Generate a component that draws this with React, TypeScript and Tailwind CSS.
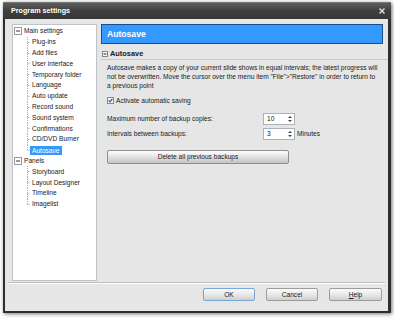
import React from 'react';

const mainItems = [
  'Plug-ins',
  'Add files',
  'User interface',
  'Temporary folder',
  'Language',
  'Auto update',
  'Record sound',
  'Sound system',
  'Confirmations',
  'CD/DVD Burner',
  'Autosave',
];
const panelItems = ['Storyboard', 'Layout Designer', 'Timeline', 'Imagelist'];

const Expander: React.FC = () => (
  <svg width="8" height="8" viewBox="0 0 8 8" className="shrink-0">
    <rect x="0.5" y="0.5" width="7" height="7" fill="#fff" stroke="#8e9aa6" />
    <line x1="2" y1="4" x2="6" y2="4" stroke="#333" />
  </svg>
);

const Connector: React.FC<{ last?: boolean }> = ({ last }) => (
  <svg width="3" height="10.8" viewBox="0 0 3 10.8" className="shrink-0">
    <line x1="0.5" y1="0" x2="0.5" y2={last ? 5.4 : 10.8} stroke="#a8a8a8" strokeDasharray="1 1" />
    <line x1="0.5" y1="5.5" x2="3" y2="5.5" stroke="#a8a8a8" strokeDasharray="1 1" />
  </svg>
);

const TreeGroup: React.FC<{ label: string; items: string[]; selected?: string }> = ({ label, items, selected }) => (
  <div>
    <div className="flex h-[10.8px] items-center pl-[1px]">
      <Expander />
      <span className="ml-[2px]">{label}</span>
    </div>
    {items.map((item, i) => (
      <div key={item} className="flex h-[10.8px] items-center pl-[14px]">
        <Connector last={i === items.length - 1} />
        <span
          className={
            item === selected
              ? 'bg-[#3399ff] text-white px-[2px] leading-[9px]'
              : 'px-[2px]'
          }
        >
          {item}
        </span>
      </div>
    ))}
  </div>
);

const SpinBox: React.FC<{ value: string }> = ({ value }) => (
  <div className="flex h-[12px] w-[32px] items-center justify-between border border-[#a9b1ba] bg-white pl-[3px] pr-[2px]">
    <span>{value}</span>
    <svg width="4" height="8" viewBox="0 0 4 8">
      <path d="M0 3 L2 1 L4 3 Z" fill="#444" />
      <path d="M0 5 L2 7 L4 5 Z" fill="#444" />
    </svg>
  </div>
);

const DlgButton: React.FC<{ children: React.ReactNode; focused?: boolean; className?: string }> = ({
  children,
  focused,
  className,
}) => (
  <div
    className={
      'flex h-[13px] items-center justify-center rounded-[2px] border bg-linear-to-b from-[#fbfbfb] via-[#e9e9e9] to-[#cfcfcf] ' +
      (focused ? 'border-[#7ba6d3] ' : 'border-[#9c9c9c] ') +
      (className ?? '')
    }
  >
    {children}
  </div>
);

const App: React.FC = () => {
  return (
    <div className="h-[318px] w-[394px] bg-white pl-[3px] pt-[2px] font-['Liberation_Sans',Arial,sans-serif] text-[6.6px] text-[#1a1a1a]">
      <div className="flex h-[311px] w-[388px] flex-col bg-[#2e2e2e] shadow-[1px_1px_4px_rgba(0,0,0,0.55)]">
        {/* title bar */}
        <div className="flex h-[17px] shrink-0 items-center justify-between border-t border-[#777] bg-linear-to-b from-[#5c5c5c] via-[#3f3f3f] to-[#363636] pl-[8px] pr-[6px]">
          <span className="text-[7.2px] font-bold text-white">Program settings</span>
          <svg width="6" height="6" viewBox="0 0 6 6">
            <path d="M0.5 0.5 L5.5 5.5 M5.5 0.5 L0.5 5.5" stroke="#e0e0e0" strokeWidth="1.4" />
          </svg>
        </div>

        {/* body */}
        <div className="mb-[2px] ml-[2px] mr-[3px] flex flex-1 flex-col bg-[#e6e6e6]">
          <div className="flex h-[262px] pt-[5px] pl-[7px]">
            {/* tree */}
            <div className="h-[257px] w-[85px] shrink-0 border border-[#bfc3c7] bg-white pt-[1px]">
              <TreeGroup label="Main settings" items={mainItems} selected="Autosave" />
              <TreeGroup label="Panels" items={panelItems} />
            </div>

            {/* content */}
            <div className="ml-[4px] flex flex-1 flex-col">
              <div className="mr-[5px] flex h-[20px] items-center border border-[#1d4f86] bg-[#3399ff] pl-[5px] text-[8.6px] font-bold text-white">
                Autosave
              </div>

              <div className="mt-[4px] flex h-[12px] items-center border-b border-[#c3cad2] pl-[1px]">
                <svg width="6" height="6" viewBox="0 0 6 6">
                  <rect x="0.5" y="0.5" width="5" height="5" fill="#fff" stroke="#7d8791" />
                  <line x1="1.5" y1="3" x2="4.5" y2="3" stroke="#222" />
                </svg>
                <span className="ml-[2px] text-[7.4px] font-bold">Autosave</span>
              </div>

              <p className="mt-[2.5px] pl-[6px] leading-[9.3px]">
                Autosave makes a copy of your current slide shows in equal intervals; the latest progress will
                <br />
                not be overwritten. Move the cursor over the menu item "File"&gt;"Restore" in order to return to
                <br />
                a previous point
              </p>

              <div className="mt-[6px] flex h-[9px] items-center pl-[6px]">
                <svg width="7" height="7" viewBox="0 0 7 7">
                  <rect x="0.5" y="0.5" width="6" height="6" fill="#f4f6f8" stroke="#7b8ea3" />
                  <path d="M1.7 3.4 L3 4.9 L5.4 1.8" fill="none" stroke="#2456a6" strokeWidth="1.2" />
                </svg>
                <span className="ml-[2px]">Activate automatic saving</span>
              </div>

              <div className="mt-[7.5px] flex h-[12px] items-center pl-[6px]">
                <span className="w-[156px]">Maximum number of backup copies:</span>
                <SpinBox value="10" />
              </div>
              <div className="mt-[3.5px] flex h-[12px] items-center pl-[6px]">
                <span className="w-[156px]">Intervals between backups:</span>
                <SpinBox value="3" />
                <span className="ml-[2px]">Minutes</span>
              </div>

              <div className="ml-[6px] mt-[10px]">
                <div className="flex h-[14px] w-[182px] items-center justify-center rounded-[2px] border border-[#8e8e8e] bg-linear-to-b from-[#fdfdfd] via-[#e2e2e2] to-[#c4c4c4]">
                  Delete all previous backups
                </div>
              </div>
            </div>
          </div>

          {/* separator */}
          <div className="mx-[3px] mt-[1px] h-[2px] border-t border-b border-t-[#bdbdbd] border-b-white" />

          {/* dialog buttons */}
          <div className="mt-[4px] flex justify-end gap-[11px] pr-[6px]">
            <DlgButton focused className="w-[52px]">OK</DlgButton>
            <DlgButton className="w-[52px]">Cancel</DlgButton>
            <DlgButton className="w-[53px]">
              <span>
                <span className="underline">H</span>elp
              </span>
            </DlgButton>
          </div>
        </div>
      </div>
    </div>
  );
};

export default App;
